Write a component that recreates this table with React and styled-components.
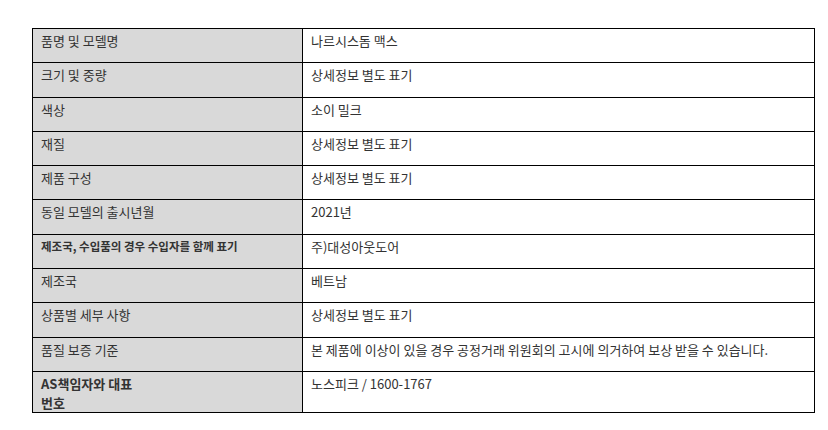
import React from "react";
import styled, { createGlobalStyle } from "styled-components";

const rows = [
	{ label: "품명 및 모델명", value: "나르시스돔 맥스" },
	{ label: "크기 및 중량", value: "상세정보 별도 표기" },
	{ label: "색상", value: "소이 밀크" },
	{ label: "재질", value: "상세정보 별도 표기" },
	{ label: "제품 구성", value: "상세정보 별도 표기" },
	{ label: "동일 모델의 출시년월", value: "2021년" },
	{ label: "제조국, 수입품의 경우 수입자를 함께 표기", value: "주)대성아웃도어", small: true },
	{ label: "제조국", value: "베트남" },
	{ label: "상품별 세부 사항", value: "상세정보 별도 표기" },
	{
		label: "품질 보증 기준",
		value: "본 제품에 이상이 있을 경우 공정거래 위원회의 고시에 의거하여 보상 받을 수 있습니다.",
	},
	{ label: "AS책임자와 대표 번호", value: "노스피크 / 1600-1767", bold: true, narrow: true },
];

function App() {
	return (
		<>
			<GlobalStyle />
			<Page>
				<Table>
					<tbody>
						{rows.map((row) => (
							<Row key={row.label} $tall={row.narrow}>
								<LabelCell>
									<Label $small={row.small} $bold={row.bold || row.small} $narrow={row.narrow}>
										{row.label}
									</Label>
								</LabelCell>
								<ValueCell>{row.value}</ValueCell>
							</Row>
						))}
					</tbody>
				</Table>
			</Page>
		</>
	);
}
export default App;

const GlobalStyle = createGlobalStyle`
	body {
		margin: 0;
		background: #fff;
		font-family: "Noto Sans CJK KR", "Noto Sans", sans-serif;
	}
`;

const Page = styled.div`
	padding: 28px 14px 0 32px;
`;

const Table = styled.table`
	width: 783px;
	border-collapse: collapse;
	table-layout: fixed;
	color: #333;
	font-size: 13px;
	line-height: 19px;
`;

const Row = styled.tr`
	height: ${(p) => (p.$tall ? "39px" : "34.3px")};
`;

const Cell = styled.td`
	border: 1px solid #000;
	vertical-align: top;
	padding: 2px 8px 0;
	box-sizing: border-box;
`;

const LabelCell = styled(Cell)`
	width: 270px;
	background: #d9d9d9;
`;

const ValueCell = styled(Cell)`
	background: #fff;
`;

const Label = styled.span`
	display: block;
	font-size: ${(p) => (p.$small ? "11.5px" : "13px")};
	font-weight: ${(p) => (p.$bold ? 700 : 400)};
	max-width: ${(p) => (p.$narrow ? "110px" : "none")};
	word-break: keep-all;
`;
